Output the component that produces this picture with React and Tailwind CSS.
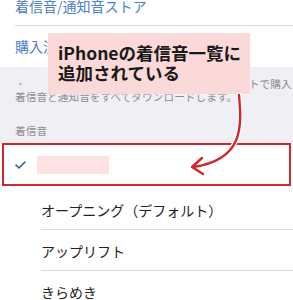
export default function App() {
  return (
    <div className="relative w-[293px] h-[300px] overflow-hidden bg-white font-['Noto_Sans_CJK_JP','Noto_Sans',sans-serif]">
      {/* store rows */}
      <div className="h-[25px] pl-[15px] overflow-hidden">
        <p className="-mt-[1px] text-[14px] leading-[14px] text-[#4a80c8] whitespace-nowrap">着信音/通知音ストア</p>
      </div>
      <div className="ml-[15px] h-px bg-[#dddddd]" />
      <div className="h-[41px] pl-[15px] flex items-center">
        <p className="text-[14px] text-[#4a80c8] whitespace-nowrap">購入済み</p>
      </div>

      {/* grey info area */}
      <div className="h-[76px] bg-[#efeff4] pl-[15px] pt-[10px] text-[10.7px] leading-[13px] text-[#8e8e93]">
        <div className="flex justify-between whitespace-nowrap">
          <span className="text-[#b0b0b5]">・</span>
          <span className="-mr-[20px]">トで購入した</span>
        </div>
        <p className="whitespace-nowrap">着信音と通知音をすべてダウンロードします。</p>
        <p className="mt-[21px]">着信音</p>
      </div>

      {/* selected row */}
      <div className="mx-[2px] h-[43px] border-[2.5px] border-[#d3262b] bg-white flex items-center pl-[11px]">
        <svg width="11" height="8" viewBox="0 0 11 8" className="shrink-0">
          <path d="M1 4.2 L4 7 L10 1" fill="none" stroke="#36609c" strokeWidth="1.6" strokeLinecap="round" strokeLinejoin="round" />
        </svg>
        <div className="ml-[11px] w-[72px] h-[18px] bg-[#fde2e2]" />
      </div>

      {/* ringtone list */}
      <div className="pl-[41px] text-[14px] text-[#222222]">
        <div className="h-[44px] pt-[5px] flex items-center border-b border-[#dddddd]">オープニング（デフォルト）</div>
        <div className="h-[41px] pt-[3px] flex items-center border-b border-[#dddddd]">アップリフト</div>
        <div className="h-[41px] pt-[1px] flex items-center">きらめき</div>
      </div>

      {/* callout */}
      <div className="absolute left-[48px] top-[33px] w-[202px] h-[61px] bg-[#fcd9d9] pl-[10px] pt-[10px] shadow-[0_0_2px_rgba(255,255,255,0.9)]">
        <p className="text-[17.5px] leading-[20px] font-bold text-[#1a1a1a] whitespace-nowrap">iPhoneの着信音一覧に</p>
        <p className="text-[17.5px] leading-[20px] font-bold text-[#1a1a1a] whitespace-nowrap">追加されている</p>
      </div>

      {/* arrow */}
      <svg className="absolute inset-0 pointer-events-none" width="293" height="300" viewBox="0 0 293 300">
        <g fill="none" strokeLinecap="round" strokeLinejoin="round">
          <path d="M239 95 C242 128 243 160 193 167" stroke="#ffffff" strokeWidth="5" />
          <path d="M202 158 L192 167 L203 174" stroke="#ffffff" strokeWidth="5" />
          <path d="M239 95 C242 128 243 160 193 167" stroke="#d3262b" strokeWidth="2.4" />
          <path d="M202 158 L192 167 L203 174" stroke="#d3262b" strokeWidth="2.4" />
        </g>
      </svg>
    </div>
  );
}
